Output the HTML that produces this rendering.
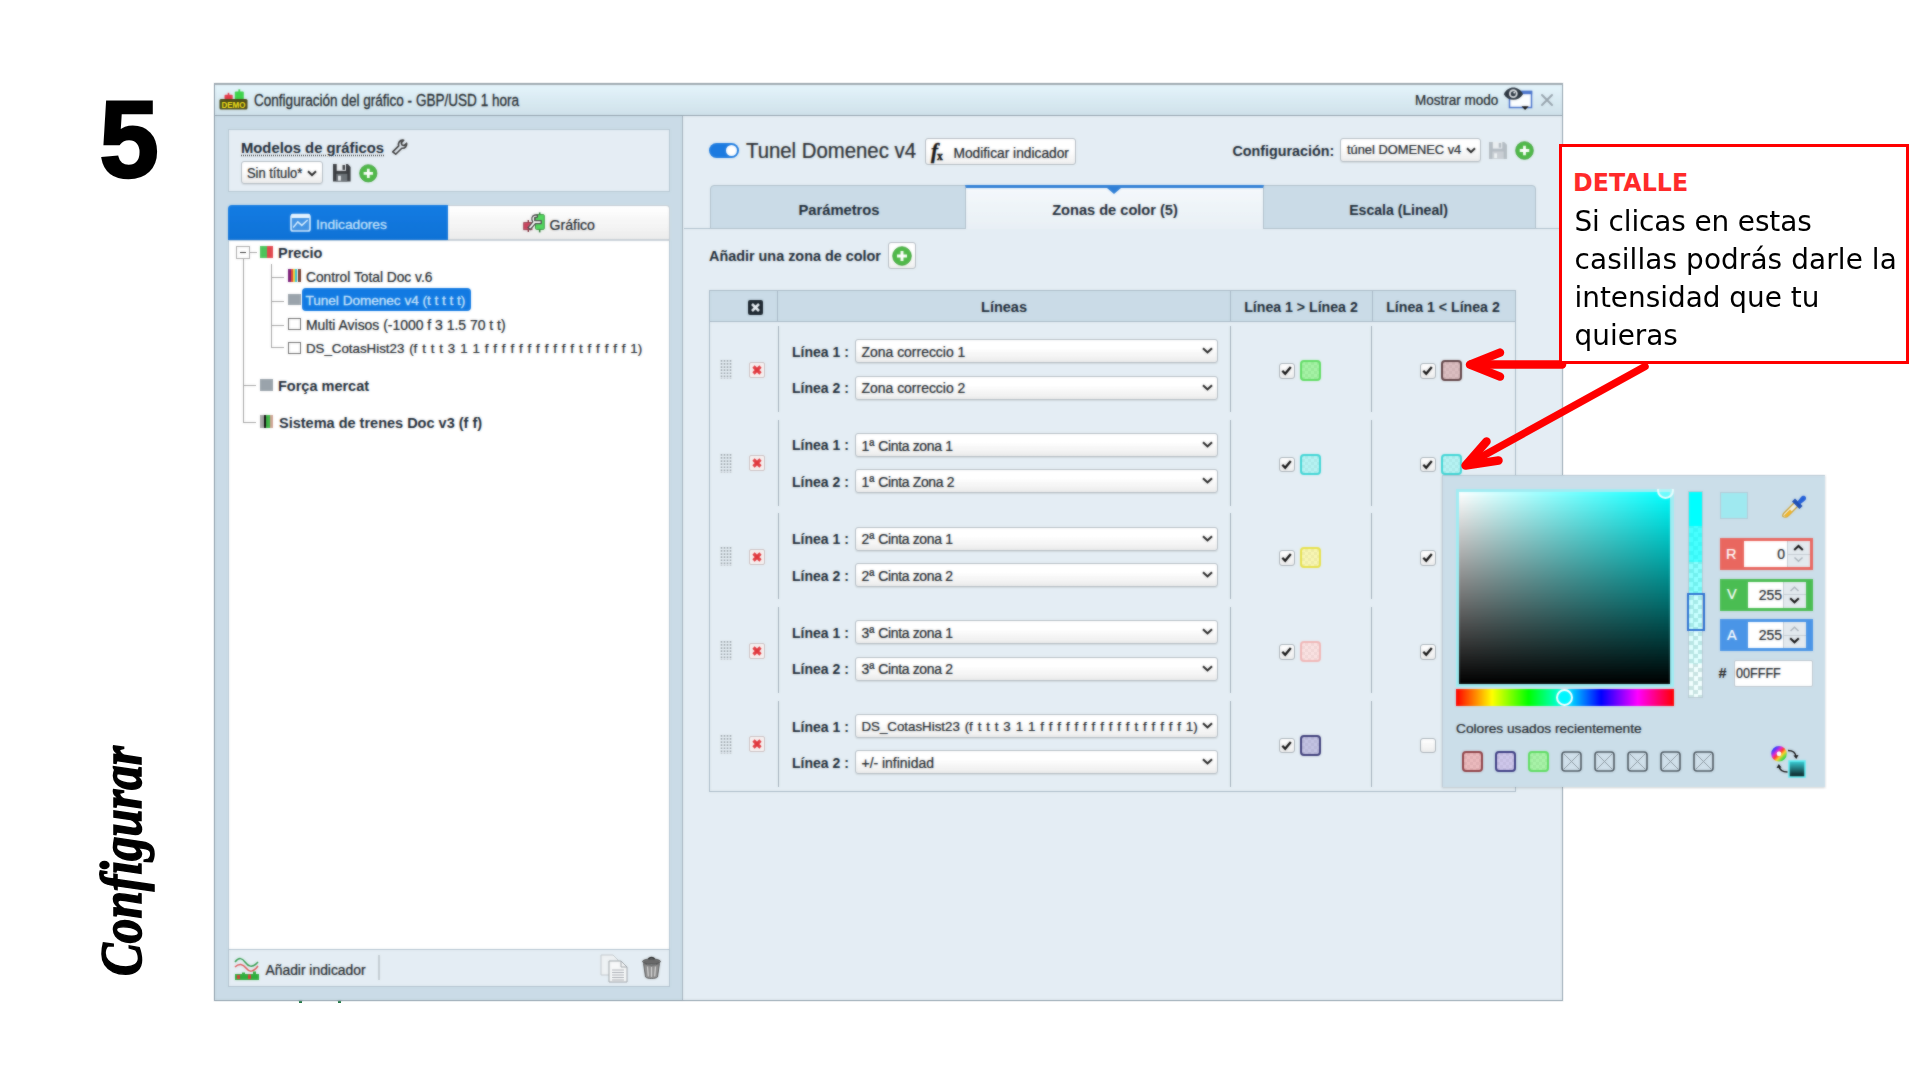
<!DOCTYPE html>
<html lang="es">
<head>
<meta charset="utf-8">
<title>Configurar - paso 5</title>
<style>
*{box-sizing:border-box;margin:0;padding:0}
html,body{width:1920px;height:1080px;overflow:hidden;background:#fff}
body{position:relative;font-family:"Liberation Sans",sans-serif;font-size:14px;color:#222}
.a{position:absolute}
.t{position:absolute;white-space:nowrap;height:20px;line-height:20px;font-size:14px;color:#20262b;-webkit-text-stroke:.220px #20262b}
.b{font-weight:bold;font-size:14.500px;color:#1c2a36;-webkit-text-stroke:0}
.w{color:#fff;-webkit-text-stroke-color:#fff}
svg{position:absolute;overflow:visible}
#app{position:absolute;left:0;top:0;width:1920px;height:1080px}
.soft{position:absolute;-webkit-backdrop-filter:blur(.8px);backdrop-filter:blur(.8px);opacity:.55;pointer-events:none}
.sel{position:absolute;border:1px solid #b4bcc3;border-radius:3px;background:linear-gradient(#fff 35%,#ececec);box-shadow:0 1px 1px rgba(0,0,0,.08)}
.sel .t{left:6px;top:1.800px}
.sel svg{right:4px;top:7px}
.vl{position:absolute;width:1px;background:#9fadb8}
.cb{position:absolute;width:15.500px;height:15.500px;border:1px solid #a9b1b8;border-radius:3px;background:linear-gradient(#fff,#ededed)}
.sw{position:absolute;width:21px;height:21px;border-radius:4px;border:2px solid}
</style>
</head>
<body>
<!-- slide decorations -->
<div class="a" id="num" style="left:96px;top:84.200px;width:66px;height:110px;line-height:110px;font-size:110px;font-weight:bold;color:#000;text-align:center;-webkit-text-stroke:2.500px #000;transform:scaleX(.975)">5</div>
<div class="a" id="cfg" style="left:0;top:0;width:0;height:0"><div id="cfgt" style="position:absolute;left:0;top:0;white-space:nowrap;font-family:'Liberation Serif',serif;font-weight:bold;font-style:italic;font-size:56px;line-height:56px;color:#000;-webkit-text-stroke:1.500px #000;transform-origin:0 0;transform:translate(91.300px,976px) rotate(-90deg) scale(.879,1.060)">Configurar</div></div>
<div id="app">
<!-- window frame -->
<div class="a" style="left:213.500px;top:82.700px;width:1349.500px;height:918px;background:#c9dbe6;border:1px solid #8f9fab;border-top:2px solid #9fa9b0"></div>
<!-- title bar -->
<div class="a" style="left:214.500px;top:84.700px;width:1347.500px;height:31.500px;background:linear-gradient(#e4f4fb,#d7e8f0 60%,#cfe1ea);border-bottom:1.500px solid #93a3ae"></div>
<svg style="left:219px;top:89px" width="29" height="22" viewBox="0 0 29 22"><rect x="5.500" y="5.800" width="8.200" height="4.500" rx="1" fill="#e23b4a"/><rect x="8.700" y="3.800" width="1.600" height="3" fill="#e23b4a"/><rect x="15.800" y="2.400" width="9" height="8" rx="1" fill="#3ed24a"/><rect x="19.400" y=".300" width="1.800" height="3" fill="#3ed24a"/><rect x=".500" y="10" width="28" height="10.500" rx="1.500" fill="#4a4a18"/><text x="14.500" y="18.600" font-family="Liberation Sans, sans-serif" font-weight="bold" font-size="8.6" fill="#f5e21a" text-anchor="middle" textLength="24" lengthAdjust="spacingAndGlyphs">DEMO</text></svg>
<div class="t" style="left:254px;top:90.500px;font-size:13.550px;transform:scaleY(1.200)">Configuración del gráfico - GBP/USD 1 hora</div>
<div class="t" style="left:1415px;top:91.300px;font-size:13.500px;transform:scaleY(1.070)">Mostrar modo</div>
<svg style="left:1503px;top:87px" width="30" height="24" viewBox="0 0 30 24"><rect x="6.500" y="4.500" width="22" height="16" fill="#fbfdff" stroke="#4a74cc" stroke-width="1.500"/><rect x="5.800" y="3.800" width="23.400" height="3.400" fill="#4a74cc"/><path d="M.800 7.200C5-1.600 15.500-1.600 20 7.200 15.500 14.600 5 14.600.800 7.200z" fill="#2c3640"/><circle cx="10.300" cy="6.700" r="4.400" fill="#d9dde1"/><circle cx="10.300" cy="6.700" r="2.500" fill="#2c3640"/><circle cx="11.200" cy="5.700" r=".900" fill="#e8ecef"/><path d="M18.500 19.300h7.200l-3.600 3.600z" fill="#111"/></svg>
<svg style="left:1541px;top:94px" width="12" height="12" viewBox="0 0 12 12"><path d="M1 1L11 11M11 1L1 11" stroke="#98a4ad" stroke-width="2" stroke-linecap="round"/></svg>
<!-- left column -->
<div class="a" style="left:681.800px;top:116px;width:1.200px;height:884px;background:#a2b0ba"></div>
<div class="a" style="left:228px;top:129px;width:442px;height:63px;background:#e5edf4;border:1px solid #b7c7d3"></div>
<div class="t b" style="left:241px;top:138px;font-size:14.8px;text-decoration:underline dotted #444;text-underline-offset:2px">Modelos de gráficos</div>
<svg style="left:391px;top:140px" width="17" height="16" viewBox="0 0 17 16"><path d="M2.2 14.2 8.2 8.2C7.3 5.6 9 2.4 12.2 2.4l1 .2-2.4 2.5.7 2.2 2.2.6 2.4-2.4c.6 3-1.5 5.600-4.800 5L5.200 16.5z" transform="translate(-.5 -2.3)" fill="none" stroke="#3a3a3a" stroke-width="1.600" stroke-linejoin="round"/></svg>
<div class="sel" style="left:241px;top:161px;width:82px;height:23px"><div class="t" style="font-size:12.900px;left:5px;transform:scaleY(1.100)">Sin título*</div><svg width="10" height="7" viewBox="0 0 10 7" style="right:5px;top:8px"><path d="M1 1.200 5 5.200 9 1.200" fill="none" stroke="#222" stroke-width="2"/></svg></div>
<svg style="left:332.700px;top:164.200px" width="17.600" height="17.600" viewBox="0 0 19 18" preserveAspectRatio="none"><path d="M0 0H16L19 3V18H0z" fill="#3a3d40"/><rect x="4" y="0" width="10" height="7" fill="#e9edf0"/><rect x="10.3" y="1" width="2.600" height="5" fill="#3a3d40"/><rect x="3.500" y="10" width="12" height="8" fill="#6d7378"/><rect x="5.500" y="12" width="3" height="5" fill="#e9edf0"/></svg>
<svg style="left:358.700px;top:163.700px" width="18.600" height="18.600" viewBox="0 0 20 20"><circle cx="10" cy="10" r="9.300" fill="#4fb848" stroke="#3a9a36" stroke-width=".8"/><path d="M10 5v10M5 10h10" stroke="#fff" stroke-width="2.900"/></svg>
<!-- left tabs -->
<div class="a" style="left:228px;top:205px;width:220px;height:35px;background:linear-gradient(#147ce3,#0f72d6);border-radius:4px 0 0 0"></div>
<div class="a" style="left:448px;top:205px;width:222px;height:35px;background:linear-gradient(#fff,#ececec);border:1px solid #c5cdd3;border-left:0;border-radius:0 4px 0 0"></div>
<svg style="left:290.300px;top:212.600px" width="21" height="19" viewBox="0 0 21 19"><rect x="1" y="2.500" width="19" height="15.500" rx="2" fill="rgba(255,255,255,.22)" stroke="#cfe8fd" stroke-width="1.700"/><rect x=".800" y=".800" width="19.400" height="4.200" rx="1.500" fill="#e6f3fe"/><path d="M3.200 14.500 7.800 8.800l4 3.600 5.800-5.400" fill="none" stroke="#d4ebfd" stroke-width="1.600"/></svg>
<div class="t" style="left:316px;top:215.300px;font-size:13.700px;color:#c6e3fc;-webkit-text-stroke:.300px #c6e3fc">Indicadores</div>
<svg style="left:523px;top:212px" width="22" height="21" viewBox="0 0 22 21"><path d="M5.300 8v12" stroke="#7a2a35" stroke-width="1.400"/><rect x=".700" y="10.600" width="8.300" height="7.100" fill="#cc4560" stroke="#8a3040" stroke-width=".800"/><path d="M16.700 .400v20" stroke="#2a7a30" stroke-width="1.600"/><rect x="12.500" y="2.600" width="8.800" height="14.800" rx="1" fill="#52d85e" stroke="#2f8a36" stroke-width=".900"/><path d="M5 15.600 9.800 9.800C8 7.200 8.600 3.600 12 3l2.400-.100v2.200l-2.700.500v3h6.500v3h-5.800L7.200 17.600z" fill="#fff" stroke="#4a4a4a" stroke-width="1.300" stroke-linejoin="round"/></svg>
<div class="t" style="left:549.500px;top:215px;font-size:14.100px">Gráfico</div>
<!-- tree -->
<div class="a" style="left:228px;top:240px;width:442px;height:710px;background:#fff;border:1px solid #b7c7d3;border-top-color:#c9d2d9"></div>
<!-- tree connector lines -->
<div class="a" style="left:243px;top:259px;width:1px;height:163px;background:#a3a3a3"></div>
<div class="a" style="left:243px;top:385px;width:13px;height:1px;background:#a3a3a3"></div>
<div class="a" style="left:243px;top:422px;width:13px;height:1px;background:#a3a3a3"></div>
<div class="a" style="left:250px;top:252px;width:7px;height:1px;background:#a3a3a3"></div>
<div class="a" style="left:271px;top:264px;width:1px;height:84px;background:#a3a3a3"></div>
<div class="a" style="left:271px;top:277px;width:13px;height:1px;background:#a3a3a3"></div>
<div class="a" style="left:271px;top:301px;width:13px;height:1px;background:#a3a3a3"></div>
<div class="a" style="left:271px;top:325px;width:13px;height:1px;background:#a3a3a3"></div>
<div class="a" style="left:271px;top:347px;width:13px;height:1px;background:#a3a3a3"></div>
<!-- expander -->
<div class="a" style="left:236px;top:245.500px;width:13.500px;height:13.500px;border:1px solid #a9a9a9;background:#fff"></div>
<div class="a" style="left:239.500px;top:251.500px;width:6.500px;height:1.500px;background:#333"></div>
<!-- Precio -->
<div class="a" style="left:260px;top:246px;width:7px;height:12px;background:#4cc35a"></div><div class="a" style="left:267px;top:246px;width:6px;height:12px;background:#e0484e"></div>
<div class="t b" style="left:278px;top:243px">Precio</div>
<!-- Control Total -->
<div class="a" style="left:288px;top:269px;width:13px;height:13px;background:linear-gradient(90deg,#7a1f7a 0 25%,#e04a35 25% 42%,#f0d03a 42% 50%,#35c3d3 50% 72%,#f4f4f4 72% 77%,#7a4030 77%)"></div>
<div class="t" style="left:306px;top:267.800px;font-size:13.750px">Control Total Doc v.6</div>
<!-- Tunel selected -->
<div class="a" style="left:288px;top:294px;width:13px;height:11px;background:#9aa3aa"></div>
<div class="a" style="left:302px;top:288.400px;width:168.800px;height:22.400px;background:#127ae2;border-radius:4px"></div>
<div class="t" style="left:305.500px;top:291.400px;font-size:13.550px;color:#cbe5fc;-webkit-text-stroke:.300px #cbe5fc">Tunel Domenec v4 (t t t t t)</div>
<!-- Multi Avisos -->
<div class="a" style="left:288px;top:318px;width:13px;height:12px;border:1px solid #6d6d6d;background:#fff"></div>
<div class="t" style="left:306px;top:315px;font-size:13.950px">Multi Avisos (-1000 f 3 1.5 70 t t)</div>
<!-- DS_Cotas -->
<div class="a" style="left:288px;top:342px;width:13px;height:12px;border:1px solid #6d6d6d;background:#fff"></div>
<div class="t" style="left:306px;top:339px;font-size:13.300px;word-spacing:1.180px">DS_CotasHist23 (f t t t 3 1 1 f f f f f f f f f f f t f f f f f 1)</div>
<!-- Força mercat -->
<div class="a" style="left:260px;top:379px;width:13px;height:12px;background:#9aa3aa"></div>
<div class="t b" style="left:278px;top:376px">Força mercat</div>
<!-- Sistema de trenes -->
<div class="a" style="left:260px;top:415px;width:13px;height:13px;background:linear-gradient(90deg,#a5a5a5 0 27%,#111 27% 47%,#3fb548 47% 76%,#cfa595 76%)"></div>
<div class="t b" style="left:279px;top:412.500px">Sistema de trenes Doc v3 (f f)</div>
<!-- bottom bar -->
<div class="a" style="left:228px;top:949px;width:442px;height:38px;background:#e4edf3;border:1px solid #b2c2ce"></div>
<svg style="left:234px;top:956px" width="26" height="24" viewBox="0 0 26 24"><path d="M1 6C5 1 8 2 11 6s7 7 13 0" fill="none" stroke="#2f9a4a" stroke-width="1.500"/><path d="M1 11c4-4 8-3 11 1s7 5 12-2" fill="none" stroke="#e05555" stroke-width="1.500"/><path d="M1 18h24v6H1z" fill="#2fae3c"/><path d="M3 19h3v4H3zM14 18.500h3V23h-3z" fill="#d9403c"/><path d="M8 16.500h3V23H8zM19 15.500h3V23h-3z" fill="#2fae3c"/></svg>
<div class="t" style="left:265.500px;top:959.500px;font-size:13.850px">Añadir indicador</div>
<div class="a" style="left:378px;top:955px;width:2px;height:25px;background:#c3ccd3"></div>
<svg style="left:600px;top:954px" width="29" height="29" viewBox="0 0 29 29"><path d="M1 1h12l5 5v15H1z" fill="#eef1f3" stroke="#c2c7cb"/><path d="M9 7h12l6 6v15H9z" fill="#f7f8f9" stroke="#9aa0a5"/><path d="M21 7v6h6" fill="none" stroke="#9aa0a5"/><path d="M12 16h12M12 18.500h12M12 21h12M12 23.500h12M12 26h12" stroke="#a9aeb3" stroke-width="1"/></svg>
<svg style="left:642px;top:957px" width="19" height="22" viewBox="0 0 19 22"><path d="M6.500 2.500C7 0 12 0 12.500 2.500" fill="none" stroke="#222" stroke-width="1.600"/><ellipse cx="9.500" cy="4.500" rx="9" ry="2.600" fill="#6b6b6b" stroke="#333" stroke-width=".8"/><path d="M1.500 6.500 3.500 20c2 2 10 2 12 0l2-13.500C13 8.500 6 8.500 1.500 6.500z" fill="#8c8c8c" stroke="#444" stroke-width=".8"/><path d="M5.500 9.500l.8 10M9.500 10v10M13.500 9.500l-.8 10" stroke="#d8d8d8" stroke-width="1.300"/></svg>
<div class="a" style="left:299px;top:1001px;width:3px;height:2px;background:#274"></div><div class="a" style="left:338px;top:1001px;width:3px;height:2px;background:#274"></div>
<!-- right panel -->
<div class="a" style="left:683px;top:116.200px;width:879px;height:883.500px;background:#e4edf3"></div>
<div class="a" style="left:709px;top:143px;width:30px;height:15px;border-radius:8px;background:#1b7ae0"></div>
<div class="a" style="left:726px;top:145px;width:11px;height:11px;border-radius:6px;background:#fff"></div>
<div class="t" style="left:746px;top:136px;height:30px;line-height:30px;font-size:20.350px;color:#2a2e32;transform:scaleY(1.080);transform-origin:50% 74%">Tunel Domenec v4</div>
<div class="a" style="left:925px;top:138px;width:151px;height:27px;border:1px solid #b3bbc2;border-radius:3px;background:linear-gradient(#fff 40%,#efefef)"></div>
<div class="t" style="left:931px;top:141px;font-family:'Liberation Serif',serif;font-style:italic;font-weight:bold;font-size:21px;color:#111;-webkit-text-stroke:.400px #111">f<span style="font-size:11.500px;font-style:normal;position:relative;top:2px;left:-1px">x</span></div>
<div class="t" style="left:953.500px;top:143.600px;font-size:13.750px;transform:scaleY(1.100)">Modificar indicador</div>
<div class="t b" style="left:1232.500px;top:140.500px;font-size:14.300px">Configuración:</div>
<div class="sel" style="left:1340px;top:138px;width:141px;height:24px"><div class="t" style="font-size:12.850px;left:6px;top:1px">túnel DOMENEC v4</div><svg width="10" height="7" viewBox="0 0 10 7" style="right:4px;top:8px"><path d="M1 1.200 5 5.200 9 1.200" fill="none" stroke="#222" stroke-width="2"/></svg></div>
<svg style="left:1489px;top:142px" width="18" height="17" viewBox="0 0 19 18"><path d="M0 0H16L19 3V18H0z" fill="#b4bcc3"/><rect x="4" y="0" width="10" height="7" fill="#e9edf0"/><rect x="10.300" y="1" width="2.600" height="5" fill="#b4bcc3"/><rect x="3.500" y="10" width="12" height="8" fill="#c9cfd4"/><rect x="5.500" y="12" width="3" height="5" fill="#eef1f3"/></svg>
<svg style="left:1514.700px;top:141px" width="19" height="19" viewBox="0 0 20 20"><circle cx="10" cy="10" r="9.300" fill="#4fb848" stroke="#3a9a36" stroke-width=".8"/><path d="M10 5v10M5 10h10" stroke="#fff" stroke-width="2.900"/></svg>
<!-- tabs -->
<div class="a" style="left:684px;top:228px;width:878px;height:1px;background:#aebecb"></div>
<div class="a" style="left:710px;top:185px;width:256px;height:44px;background:#c9dbe7;border:1px solid #afbfcb;border-radius:4px 0 0 0"></div>
<div class="a" style="left:1263px;top:185px;width:273px;height:44px;background:#c9dbe7;border:1px solid #afbfcb;border-radius:0 4px 0 0"></div>
<div class="a" style="left:965px;top:185px;width:299px;height:44px;background:linear-gradient(#f4f8fb,#e8eff5);border:1px solid #afbfcb;border-top:3px solid #2f7fd6;border-bottom:0"></div>
<svg style="left:1107px;top:188px" width="14" height="6" viewBox="0 0 14 6"><path d="M0 0h14L7 6z" fill="#2f7fd6"/></svg>
<div class="t b" style="left:739px;top:199.500px;width:200px;text-align:center;font-size:14.750px">Parámetros</div>
<div class="t b" style="left:1015px;top:199.500px;width:200px;text-align:center;font-size:14.600px">Zonas de color (5)</div>
<div class="t b" style="left:1298.500px;top:199.500px;width:200px;text-align:center;font-size:14.100px">Escala (Lineal)</div>
<!-- add zone -->
<div class="t b" style="left:709px;top:246.400px;font-size:14.400px">Añadir una zona de color</div>
<div class="a" style="left:888px;top:242px;width:28px;height:27px;border:1px solid #b3bbc2;border-radius:3px;background:linear-gradient(#fff 40%,#efefef)"></div>
<svg style="left:891.500px;top:246px" width="20" height="20" viewBox="0 0 20 20"><circle cx="10" cy="10" r="9.300" fill="#4fb848" stroke="#3a9a36" stroke-width=".8"/><path d="M10 5v10M5 10h10" stroke="#fff" stroke-width="2.900"/></svg>
<!-- table -->
<div class="a" style="left:709px;top:290px;width:807px;height:502px;border:1px solid #a8b9c5"></div>
<div class="a" style="left:710px;top:291px;width:805px;height:31px;background:#c9dbe7;border-bottom:1px solid #a8b9c5"></div>
<div class="vl" style="left:776.500px;top:291px;height:31px;background:#a8b9c5"></div>
<div class="vl" style="left:1230px;top:291px;height:31px;background:#a8b9c5"></div>
<div class="vl" style="left:1371.500px;top:291px;height:31px;background:#a8b9c5"></div>
<svg style="left:748px;top:299.500px" width="15" height="15" viewBox="0 0 15 15"><rect width="15" height="15" rx="2" fill="#1d2730"/><path d="M4 4l7 7M11 4l-7 7" stroke="#e8eef3" stroke-width="2.600"/></svg>
<div class="t b" style="left:904px;top:296.500px;width:200px;text-align:center">Líneas</div>
<div class="t b" style="left:1201px;top:296.700px;width:200px;text-align:center;font-size:14.150px">Línea 1 &gt; Línea 2</div>
<div class="t b" style="left:1343px;top:296.700px;width:200px;text-align:center;font-size:14.150px">Línea 1 &lt; Línea 2</div>
<!-- zone rows -->
<div class="vl" style="left:777.8px;top:326px;height:86px"></div>
<div class="vl" style="left:1229.5px;top:326px;height:86px"></div>
<div class="vl" style="left:1370.5px;top:326px;height:86px"></div>
<svg style="left:720px;top:360px" width="12" height="19" viewBox="0 0 12 19"><path d="M1.500 0v19M4.500 0v19M7.500 0v19M10.500 0v19" stroke="#9aa2a8" stroke-width="1.600" stroke-dasharray="1.700 1.400"/></svg>
<svg style="left:749px;top:361.5px" width="16" height="16" viewBox="0 0 16 16"><rect x=".500" y=".500" width="15" height="15" rx="1.500" fill="#f6f1f1" stroke="#cbbfc0"/><path d="M4.500 4.500l7 7M11.500 4.500l-7 7" stroke="#e0373c" stroke-width="3.200"/></svg>
<div class="t b" style="left:792px;top:341.8px;font-size:14px">Línea 1 :</div>
<div class="sel" style="left:854.500px;top:339.2px;width:363px;height:24px"><div class="t" style="font-size:13.950px">Zona correccio 1</div><svg width="11" height="7" viewBox="0 0 11 7"><path d="M1 1.200 5.500 5.400 10 1.200" fill="none" stroke="#222" stroke-width="2.100"/></svg></div>
<div class="t b" style="left:792px;top:378.2px;font-size:14px">Línea 2 :</div>
<div class="sel" style="left:854.500px;top:375.6px;width:363px;height:24px"><div class="t" style="font-size:13.950px">Zona correccio 2</div><svg width="11" height="7" viewBox="0 0 11 7"><path d="M1 1.200 5.500 5.400 10 1.200" fill="none" stroke="#222" stroke-width="2.100"/></svg></div>
<div class="cb" style="left:1279.200px;top:363px"><svg width="13" height="13" viewBox="0 0 13 13" style="left:0;top:0"><path d="M2.300 6.800 5.200 9.800 10.800 3" fill="none" stroke="#111" stroke-width="2.300"/></svg></div>
<div class="sw" style="left:1300.2px;top:360px;border-color:#5fdc63;background:linear-gradient(#8ff08fcc,#8ff08fcc),repeating-conic-gradient(#c8c8c8 0 25%,#fff 0 50%) 0 0/6px 6px"></div>
<div class="cb" style="left:1420.100px;top:363px"><svg width="13" height="13" viewBox="0 0 13 13" style="left:0;top:0"><path d="M2.300 6.800 5.200 9.800 10.800 3" fill="none" stroke="#111" stroke-width="2.300"/></svg></div>
<div class="sw" style="left:1440.8px;top:360px;border-color:#5e4043;background:linear-gradient(#d3aeb2cc,#d3aeb2cc),repeating-conic-gradient(#c8c8c8 0 25%,#fff 0 50%) 0 0/6px 6px"></div>
<div class="vl" style="left:777.8px;top:419.7px;height:86px"></div>
<div class="vl" style="left:1229.5px;top:419.7px;height:86px"></div>
<div class="vl" style="left:1370.5px;top:419.7px;height:86px"></div>
<svg style="left:720px;top:453.7px" width="12" height="19" viewBox="0 0 12 19"><path d="M1.500 0v19M4.500 0v19M7.500 0v19M10.500 0v19" stroke="#9aa2a8" stroke-width="1.600" stroke-dasharray="1.700 1.400"/></svg>
<svg style="left:749px;top:455.2px" width="16" height="16" viewBox="0 0 16 16"><rect x=".500" y=".500" width="15" height="15" rx="1.500" fill="#f6f1f1" stroke="#cbbfc0"/><path d="M4.500 4.500l7 7M11.500 4.500l-7 7" stroke="#e0373c" stroke-width="3.200"/></svg>
<div class="t b" style="left:792px;top:435.4px;font-size:14px">Línea 1 :</div>
<div class="sel" style="left:854.500px;top:432.9px;width:363px;height:24px"><div class="t" style="font-size:13.950px">1ª <span style="letter-spacing:-.330px">Cinta zona 1</span></div><svg width="11" height="7" viewBox="0 0 11 7"><path d="M1 1.200 5.500 5.400 10 1.200" fill="none" stroke="#222" stroke-width="2.100"/></svg></div>
<div class="t b" style="left:792px;top:471.9px;font-size:14px">Línea 2 :</div>
<div class="sel" style="left:854.500px;top:469.3px;width:363px;height:24px"><div class="t" style="font-size:13.950px">1ª <span style="letter-spacing:-.330px">Cinta Zona 2</span></div><svg width="11" height="7" viewBox="0 0 11 7"><path d="M1 1.200 5.500 5.400 10 1.200" fill="none" stroke="#222" stroke-width="2.100"/></svg></div>
<div class="cb" style="left:1279.200px;top:456.7px"><svg width="13" height="13" viewBox="0 0 13 13" style="left:0;top:0"><path d="M2.300 6.800 5.200 9.800 10.800 3" fill="none" stroke="#111" stroke-width="2.300"/></svg></div>
<div class="sw" style="left:1300.2px;top:453.7px;border-color:#3fd4d4;background:linear-gradient(#a4f0f0cc,#a4f0f0cc),repeating-conic-gradient(#c8c8c8 0 25%,#fff 0 50%) 0 0/6px 6px"></div>
<div class="cb" style="left:1420.100px;top:456.7px"><svg width="13" height="13" viewBox="0 0 13 13" style="left:0;top:0"><path d="M2.300 6.800 5.200 9.800 10.800 3" fill="none" stroke="#111" stroke-width="2.300"/></svg></div>
<div class="sw" style="left:1440.8px;top:453.7px;border-color:#3fd4d4;background:linear-gradient(#a4f0f0cc,#a4f0f0cc),repeating-conic-gradient(#c8c8c8 0 25%,#fff 0 50%) 0 0/6px 6px"></div>
<div class="vl" style="left:777.8px;top:513.4px;height:86px"></div>
<div class="vl" style="left:1229.5px;top:513.4px;height:86px"></div>
<div class="vl" style="left:1370.5px;top:513.4px;height:86px"></div>
<svg style="left:720px;top:547.4px" width="12" height="19" viewBox="0 0 12 19"><path d="M1.500 0v19M4.500 0v19M7.500 0v19M10.500 0v19" stroke="#9aa2a8" stroke-width="1.600" stroke-dasharray="1.700 1.400"/></svg>
<svg style="left:749px;top:548.9px" width="16" height="16" viewBox="0 0 16 16"><rect x=".500" y=".500" width="15" height="15" rx="1.500" fill="#f6f1f1" stroke="#cbbfc0"/><path d="M4.500 4.500l7 7M11.500 4.500l-7 7" stroke="#e0373c" stroke-width="3.200"/></svg>
<div class="t b" style="left:792px;top:529.1px;font-size:14px">Línea 1 :</div>
<div class="sel" style="left:854.500px;top:526.6px;width:363px;height:24px"><div class="t" style="font-size:13.950px">2ª <span style="letter-spacing:-.330px">Cinta zona 1</span></div><svg width="11" height="7" viewBox="0 0 11 7"><path d="M1 1.200 5.500 5.400 10 1.200" fill="none" stroke="#222" stroke-width="2.100"/></svg></div>
<div class="t b" style="left:792px;top:565.6px;font-size:14px">Línea 2 :</div>
<div class="sel" style="left:854.500px;top:563px;width:363px;height:24px"><div class="t" style="font-size:13.950px">2ª <span style="letter-spacing:-.330px">Cinta zona 2</span></div><svg width="11" height="7" viewBox="0 0 11 7"><path d="M1 1.200 5.500 5.400 10 1.200" fill="none" stroke="#222" stroke-width="2.100"/></svg></div>
<div class="cb" style="left:1279.200px;top:550.4px"><svg width="13" height="13" viewBox="0 0 13 13" style="left:0;top:0"><path d="M2.300 6.800 5.200 9.800 10.800 3" fill="none" stroke="#111" stroke-width="2.300"/></svg></div>
<div class="sw" style="left:1300.2px;top:547.4px;border-color:#e6e04a;background:linear-gradient(#f6f4a0cc,#f6f4a0cc),repeating-conic-gradient(#c8c8c8 0 25%,#fff 0 50%) 0 0/6px 6px"></div>
<div class="cb" style="left:1420.100px;top:550.4px"><svg width="13" height="13" viewBox="0 0 13 13" style="left:0;top:0"><path d="M2.300 6.800 5.200 9.800 10.800 3" fill="none" stroke="#111" stroke-width="2.300"/></svg></div>
<div class="vl" style="left:777.8px;top:607.1px;height:86px"></div>
<div class="vl" style="left:1229.5px;top:607.1px;height:86px"></div>
<div class="vl" style="left:1370.5px;top:607.1px;height:86px"></div>
<svg style="left:720px;top:641.1px" width="12" height="19" viewBox="0 0 12 19"><path d="M1.500 0v19M4.500 0v19M7.500 0v19M10.500 0v19" stroke="#9aa2a8" stroke-width="1.600" stroke-dasharray="1.700 1.400"/></svg>
<svg style="left:749px;top:642.6px" width="16" height="16" viewBox="0 0 16 16"><rect x=".500" y=".500" width="15" height="15" rx="1.500" fill="#f6f1f1" stroke="#cbbfc0"/><path d="M4.500 4.500l7 7M11.500 4.500l-7 7" stroke="#e0373c" stroke-width="3.200"/></svg>
<div class="t b" style="left:792px;top:622.9px;font-size:14px">Línea 1 :</div>
<div class="sel" style="left:854.500px;top:620.3px;width:363px;height:24px"><div class="t" style="font-size:13.950px">3ª <span style="letter-spacing:-.330px">Cinta zona 1</span></div><svg width="11" height="7" viewBox="0 0 11 7"><path d="M1 1.200 5.500 5.400 10 1.200" fill="none" stroke="#222" stroke-width="2.100"/></svg></div>
<div class="t b" style="left:792px;top:659.4px;font-size:14px">Línea 2 :</div>
<div class="sel" style="left:854.500px;top:656.7px;width:363px;height:24px"><div class="t" style="font-size:13.950px">3ª <span style="letter-spacing:-.330px">Cinta zona 2</span></div><svg width="11" height="7" viewBox="0 0 11 7"><path d="M1 1.200 5.500 5.400 10 1.200" fill="none" stroke="#222" stroke-width="2.100"/></svg></div>
<div class="cb" style="left:1279.200px;top:644.1px"><svg width="13" height="13" viewBox="0 0 13 13" style="left:0;top:0"><path d="M2.300 6.800 5.200 9.800 10.800 3" fill="none" stroke="#111" stroke-width="2.300"/></svg></div>
<div class="sw" style="left:1300.2px;top:641.1px;border-color:#f0b6b6;background:linear-gradient(#f9dadacc,#f9dadacc),repeating-conic-gradient(#c8c8c8 0 25%,#fff 0 50%) 0 0/6px 6px"></div>
<div class="cb" style="left:1420.100px;top:644.1px"><svg width="13" height="13" viewBox="0 0 13 13" style="left:0;top:0"><path d="M2.300 6.800 5.200 9.800 10.800 3" fill="none" stroke="#111" stroke-width="2.300"/></svg></div>
<div class="vl" style="left:777.8px;top:700.8px;height:86px"></div>
<div class="vl" style="left:1229.5px;top:700.8px;height:86px"></div>
<div class="vl" style="left:1370.5px;top:700.8px;height:86px"></div>
<svg style="left:720px;top:734.8px" width="12" height="19" viewBox="0 0 12 19"><path d="M1.500 0v19M4.500 0v19M7.500 0v19M10.500 0v19" stroke="#9aa2a8" stroke-width="1.600" stroke-dasharray="1.700 1.400"/></svg>
<svg style="left:749px;top:736.3px" width="16" height="16" viewBox="0 0 16 16"><rect x=".500" y=".500" width="15" height="15" rx="1.500" fill="#f6f1f1" stroke="#cbbfc0"/><path d="M4.500 4.500l7 7M11.500 4.500l-7 7" stroke="#e0373c" stroke-width="3.200"/></svg>
<div class="t b" style="left:792px;top:716.5px;font-size:14px">Línea 1 :</div>
<div class="sel" style="left:854.500px;top:714px;width:363px;height:24px"><div class="t" style="font-size:13.300px;word-spacing:1.180px">DS_CotasHist23 (f t t t 3 1 1 f f f f f f f f f f f t f f f f f 1)</div><svg width="11" height="7" viewBox="0 0 11 7"><path d="M1 1.200 5.500 5.400 10 1.200" fill="none" stroke="#222" stroke-width="2.100"/></svg></div>
<div class="t b" style="left:792px;top:753px;font-size:14px">Línea 2 :</div>
<div class="sel" style="left:854.500px;top:750.4px;width:363px;height:24px"><div class="t" style="font-size:13.950px">+/- infinidad</div><svg width="11" height="7" viewBox="0 0 11 7"><path d="M1 1.200 5.500 5.400 10 1.200" fill="none" stroke="#222" stroke-width="2.100"/></svg></div>
<div class="cb" style="left:1279.200px;top:737.8px"><svg width="13" height="13" viewBox="0 0 13 13" style="left:0;top:0"><path d="M2.300 6.800 5.200 9.800 10.800 3" fill="none" stroke="#111" stroke-width="2.300"/></svg></div>
<div class="sw" style="left:1300.2px;top:734.8px;border-color:#3c3c78;background:linear-gradient(#b4b4dccc,#b4b4dccc),repeating-conic-gradient(#c8c8c8 0 25%,#fff 0 50%) 0 0/6px 6px"></div>
<div class="cb" style="left:1420.100px;top:737.8px"></div>
<!-- colour picker popup -->
<div class="a" style="left:1442px;top:475px;width:383px;height:312px;background:#cbdde8;border-top:1px solid #b9c8d3;border-left:1px solid #bccbd6;box-shadow:0 1px 2px rgba(0,0,0,.18)"></div>
<div class="a" style="left:1455.500px;top:489px;width:218px;height:198px;background:#a0ecf2"></div>
<div class="a" style="left:1459px;top:492px;width:211px;height:192px;background:linear-gradient(rgba(0,0,0,0),#000),linear-gradient(90deg,#fff,#00ffff)"></div>
<div class="a" style="left:1657px;top:482px;width:17px;height:17px;border-radius:50%;border:2.500px solid #eafcfd;background:rgba(190,250,252,.55);clip-path:inset(7px 0 0 0)"></div>
<div class="a" style="left:1455.500px;top:688.500px;width:218.500px;height:17.500px;background:linear-gradient(90deg,#f00,#ff0 16.600%,#0f0 33.300%,#0ff 50%,#00f 66.600%,#f0f 83.300%,#f00)"></div>
<div class="a" style="left:1556px;top:688.500px;width:17px;height:17px;border-radius:50%;border:2.500px solid #fff;background:#00f6ff"></div>
<!-- alpha strip -->
<div class="a" style="left:1689.300px;top:492px;width:13px;height:204.500px;background:repeating-conic-gradient(#d2e2e0 0 25%,#fff 0 50%) 0 0/9px 9px;outline:1px solid #b9cad3"></div>
<div class="a" style="left:1689.300px;top:492px;width:13px;height:204.500px;background:linear-gradient(rgba(0,255,255,1) 0 16.600%,rgba(0,255,255,.72) 16.600% 34%,rgba(0,255,255,.46) 34% 49.300%,rgba(0,255,255,.22) 49.300% 67.300%,rgba(0,255,255,.120) 67.300% 83.800%,rgba(0,255,255,.050) 83.800%)"></div>
<div class="a" style="left:1687px;top:592.500px;width:18px;height:38px;border:2px solid #2c6fd0"></div>
<!-- preview + dropper -->
<div class="a" style="left:1719.500px;top:492px;width:28px;height:27px;background:#9fe8f0;border:1px solid #b3cdd8"></div>
<svg style="left:1781px;top:494px" width="26" height="24" viewBox="0 0 26 24"><path d="M2 22.500c-1-2 .5-3 2-4.500L14 8l3.500 3.500L7.500 21.500c-1.500 1.500-3 2.500-5.500 1z" fill="#f0f0e4" stroke="#c9a23a" stroke-width="1.400"/><path d="M3 21.500 9 15.500l2.500 2.500-5 4.500c-1.500 1-2.500 0-3.500-1z" fill="#f0b429"/><path d="M13 6.500l6.500 6.500M12 7.500l2-2 6.500 6.500-2 2z" fill="#1e4fb4" stroke="#1e4fb4" stroke-width="1.500"/><path d="M16.500 7.500 20 3c1.500-2 4.500-1.500 5 .5.500 2-1 3-2.500 4.200L19 10.200z" fill="#2460d8"/></svg>
<!-- R V A rows -->
<div class="a" style="left:1719.500px;top:537.500px;width:93.500px;height:32.500px;background:#e8675f"></div>
<div class="a" style="left:1744px;top:540.500px;width:66px;height:26.500px;background:#fff"></div>
<div class="a" style="left:1786.500px;top:540.500px;width:23.500px;height:26.500px;background:#e3e9ee;border-left:1px solid #c5ccd2"></div>
<div class="a" style="left:1787px;top:553.500px;width:23px;height:1px;background:#c5ccd2"></div>
<div class="t w" style="left:1726px;top:543.500px;font-size:14.500px">R</div>
<div class="t" style="left:1746px;top:543.500px;width:39px;text-align:right;font-size:14px">0</div>
<svg style="left:1793px;top:544px" width="11" height="20" viewBox="0 0 11 20"><path d="M1.200 6 5.500 2 9.800 6" fill="none" stroke="#111" stroke-width="2.100"/><path d="M1.500 13.500 5.500 17.200 9.500 13.500" fill="none" stroke="#a9b2b9" stroke-width="1.500"/></svg>
<div class="a" style="left:1719.500px;top:578.500px;width:93.500px;height:32px;background:#4bbd52"></div>
<div class="a" style="left:1748px;top:581.500px;width:58px;height:26px;background:#fff"></div>
<div class="a" style="left:1783px;top:581.500px;width:23px;height:26px;background:#e3e9ee;border-left:1px solid #c5ccd2"></div>
<div class="a" style="left:1783.500px;top:594px;width:22.500px;height:1px;background:#c5ccd2"></div>
<div class="t w" style="left:1727px;top:584px;font-size:14.500px">V</div>
<div class="t" style="left:1748px;top:584.500px;width:34px;text-align:right;font-size:14px">255</div>
<svg style="left:1789px;top:584.500px" width="11" height="20" viewBox="0 0 11 20"><path d="M1.500 6 5.500 2.300 9.500 6" fill="none" stroke="#a9b2b9" stroke-width="1.500"/><path d="M1.200 13.300 5.500 17.300 9.800 13.300" fill="none" stroke="#111" stroke-width="2.100"/></svg>
<div class="a" style="left:1719.500px;top:619px;width:93.500px;height:32px;background:#4a95e6"></div>
<div class="a" style="left:1748px;top:622px;width:58px;height:26px;background:#fff"></div>
<div class="a" style="left:1783px;top:622px;width:23px;height:26px;background:#e3e9ee;border-left:1px solid #c5ccd2"></div>
<div class="a" style="left:1783.500px;top:634.500px;width:22.500px;height:1px;background:#c5ccd2"></div>
<div class="t w" style="left:1727px;top:624.500px;font-size:14.500px">A</div>
<div class="t" style="left:1748px;top:625px;width:34px;text-align:right;font-size:14px">255</div>
<svg style="left:1789px;top:625px" width="11" height="20" viewBox="0 0 11 20"><path d="M1.500 6 5.500 2.300 9.500 6" fill="none" stroke="#a9b2b9" stroke-width="1.500"/><path d="M1.200 13.300 5.500 17.300 9.800 13.300" fill="none" stroke="#111" stroke-width="2.100"/></svg>
<!-- hex -->
<div class="t b" style="left:1718.500px;top:663px;font-size:14.500px;color:#222">#</div>
<div class="a" style="left:1733.500px;top:660px;width:79px;height:26.500px;background:#fff;border:1px solid #bcc6ce;border-radius:2px"></div>
<div class="t" style="left:1736px;top:664px;font-size:12.600px;transform:scaleY(1.100)">00FFFF</div>
<!-- recent colours -->
<div class="t" style="left:1456px;top:719px;font-size:13.700px">Colores usados recientemente</div>
<div class="sw" style="left:1461.5px;top:751px;border-color:#8e3f44;background:linear-gradient(#e6a9adcc,#e6a9adcc),repeating-conic-gradient(#c8c8c8 0 25%,#fff 0 50%) 0 0/6px 6px"></div>
<div class="sw" style="left:1494.5px;top:751px;border-color:#3a3a80;background:linear-gradient(#c3b9e6cc,#c3b9e6cc),repeating-conic-gradient(#c8c8c8 0 25%,#fff 0 50%) 0 0/6px 6px"></div>
<div class="sw" style="left:1527.5px;top:751px;border-color:#5fdc63;background:linear-gradient(#93f093cc,#93f093cc),repeating-conic-gradient(#c8c8c8 0 25%,#fff 0 50%) 0 0/6px 6px"></div>
<svg style="left:1560.5px;top:751px" width="21" height="21" viewBox="0 0 21 21"><rect x="1" y="1" width="19" height="19" rx="3" fill="#d0e0ea" stroke="#4a555d" stroke-width="1.600"/><path d="M3 3l15 15M18 3 3 18" stroke="#8b979f" stroke-width="1"/></svg>
<svg style="left:1593.5px;top:751px" width="21" height="21" viewBox="0 0 21 21"><rect x="1" y="1" width="19" height="19" rx="3" fill="#d0e0ea" stroke="#4a555d" stroke-width="1.600"/><path d="M3 3l15 15M18 3 3 18" stroke="#8b979f" stroke-width="1"/></svg>
<svg style="left:1626.5px;top:751px" width="21" height="21" viewBox="0 0 21 21"><rect x="1" y="1" width="19" height="19" rx="3" fill="#d0e0ea" stroke="#4a555d" stroke-width="1.600"/><path d="M3 3l15 15M18 3 3 18" stroke="#8b979f" stroke-width="1"/></svg>
<svg style="left:1659.5px;top:751px" width="21" height="21" viewBox="0 0 21 21"><rect x="1" y="1" width="19" height="19" rx="3" fill="#d0e0ea" stroke="#4a555d" stroke-width="1.600"/><path d="M3 3l15 15M18 3 3 18" stroke="#8b979f" stroke-width="1"/></svg>
<svg style="left:1692.5px;top:751px" width="21" height="21" viewBox="0 0 21 21"><rect x="1" y="1" width="19" height="19" rx="3" fill="#d0e0ea" stroke="#4a555d" stroke-width="1.600"/><path d="M3 3l15 15M18 3 3 18" stroke="#8b979f" stroke-width="1"/></svg>
<svg style="left:1770px;top:744px" width="36" height="35" viewBox="0 0 36 35"><circle cx="9" cy="9.700" r="5" fill="none" stroke="url(#hw)" stroke-width="5.600"/><defs><linearGradient id="hw" x1="0" y1="0" x2="1" y2="1"><stop offset="0" stop-color="#2a3cff"/><stop offset=".300" stop-color="#e02ad8"/><stop offset=".500" stop-color="#ff3a2a"/><stop offset=".700" stop-color="#ffd52a"/><stop offset="1" stop-color="#2ad84a"/></linearGradient><linearGradient id="sq" x1="0" y1="0" x2="0" y2="1"><stop offset="0" stop-color="#3ad0d8"/><stop offset="1" stop-color="#0a1a1c"/></linearGradient></defs><circle cx="9" cy="9.700" r="2.300" fill="#fff"/><rect x="19" y="17" width="16" height="16" fill="url(#sq)" stroke="#5ff0f4" stroke-width="1.500"/><path d="M18 6.500c5 0 7.500 2 8 6" fill="none" stroke="#111" stroke-width="1.500"/><path d="M23.500 11.500l2.800 3.500 2.200-4z" fill="#111"/><path d="M17.500 28c-5 0-8-2-8.500-6" fill="none" stroke="#111" stroke-width="1.500"/><path d="M11.500 23.500 8.800 20 6.500 24z" fill="#111"/></svg>
</div><!-- /app -->
<!-- soft-focus overlays: the embedded screenshot is slightly upscaled -->
<div class="soft" style="left:213px;top:82px;width:1614px;height:920px;clip-path:polygon(0 0,1351px 0,1351px 392px,1614px 392px,1614px 707px,1351px 707px,1351px 920px,0 920px)"></div>
<!-- arrows -->
<svg style="left:0;top:0" width="1920" height="1080" viewBox="0 0 1920 1080">
<g fill="none" stroke="#ff0000" stroke-linecap="round" stroke-linejoin="round">
<path d="M1562 364.400H1471" stroke-width="8.500"/>
<path d="M1500 352.600 1470 364.600 1500 376.600" stroke-width="8.500"/>
<path d="M1645 366.500 1466.500 465" stroke-width="7.500"/>
<path d="M1486.500 441.500 1465.500 465.500 1498.500 460.500" stroke-width="8.500"/>
</g>
</svg>
<!-- callout -->
<div class="a" style="left:1559.200px;top:143.800px;width:349.500px;height:220px;border:3.800px solid #ff0000;background:#fff"></div>
<div class="a" id="det" style="left:1573.100px;top:164.300px;height:36px;line-height:36px;white-space:nowrap;font-family:'DejaVu Sans','Liberation Sans',sans-serif;font-weight:bold;font-size:25.500px;color:#ff2a2a;transform-origin:0 50%;transform:scaleX(.932)">DETALLE</div>
<div class="a" id="ct" style="left:1574.500px;top:202.700px;width:340px;font-family:'DejaVu Sans','Liberation Sans',sans-serif;font-size:27.900px;line-height:38.100px;color:#000;white-space:nowrap"><span style="letter-spacing:-.100px">Si clicas en estas</span><br><span style="letter-spacing:.100px">casillas podrás darle la</span><br>intensidad que tu<br>quieras</div>
</body>
</html>
